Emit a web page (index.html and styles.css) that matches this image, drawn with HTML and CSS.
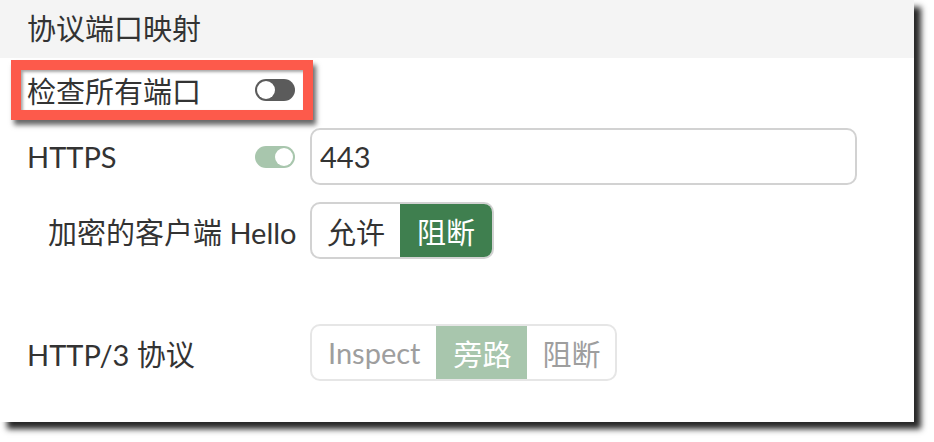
FILE: index.html
```html
<!DOCTYPE html>
<html lang="zh-CN">
<head>
    <meta charset="UTF-8">
    <meta name="viewport" content="width=device-width, initial-scale=1.0">
    <title>协议端口映射</title>
    <link rel="stylesheet" href="styles.css">
</head>
<body>
    <section class="panel">
        <header class="panel-header">协议端口映射</header>

        <div class="highlight">
            <div class="row row-check">
                <span class="label">检查所有端口</span>
                <span class="toggle"></span>
            </div>
        </div>

        <div class="row row-https">
            <span class="label">HTTPS</span>
            <span class="toggle toggle-on"></span>
            <input class="port-input" type="text" value="443">
        </div>

        <div class="row row-hello">
            <span class="label label-sub">加密的客户端 Hello</span>
            <div class="segment">
                <span class="seg-item">允许</span>
                <span class="seg-item seg-active">阻断</span>
            </div>
        </div>

        <div class="row row-http3">
            <span class="label label-wide">HTTP/3 协议</span>
            <div class="segment segment-disabled">
                <span class="seg-item">Inspect</span>
                <span class="seg-item seg-active">旁路</span>
                <span class="seg-item">阻断</span>
            </div>
        </div>
    </section>
</body>
</html>
```

FILE: styles.css
```css
:root {
    --text: #333333;
    --header-bg: #f4f4f4;
    --green: #3f7f4f;
    --green-light: #a8c6ad;
    --border: #d2d2d2;
    --red: #fd5a4b;
}

* {
    margin: 0;
    padding: 0;
    box-sizing: border-box;
}

body {
    background: #ffffff;
    color: var(--text);
    font-family: Lato, "Noto Sans CJK SC", sans-serif;
    font-size: 29px;
    min-height: 442px;
    padding-bottom: 20px;
}

.panel {
    width: 914px;
    height: 422px;
    background: #ffffff;
    box-shadow: 7px 7px 6px rgba(0,0,0,0.85);
}

.panel-header {
    height: 58px;
    line-height: 58px;
    padding-left: 27px;
    background: var(--header-bg);
}

.highlight {
    width: 302px;
    margin: 2px 0 0 11px;
    border: 10px solid var(--red);
    box-shadow: 3px 5px 5px rgba(0,0,0,0.6);
}

.row {
    display: flex;
    align-items: center;
}

.row-check {
    height: 40px;
    padding-left: 6px;
    box-shadow: inset 2px 2px 3px rgba(0,0,0,0.35);
}

.label {
    width: 228px;
    flex-shrink: 0;
    white-space: nowrap;
}

.toggle {
    width: 40px;
    height: 22px;
    border-radius: 11px;
    background: #5b5b5b;
    display: flex;
    align-items: center;
    padding: 0 2px;
    flex-shrink: 0;
}

.toggle::before {
    content: "";
    width: 18px;
    height: 18px;
    border-radius: 50%;
    background: #ffffff;
}

.toggle-on {
    background: var(--green-light);
    justify-content: flex-end;
}

.row-https {
    height: 57px;
    margin-top: 8px;
    padding-left: 27px;
}

.port-input {
    width: 547px;
    height: 57px;
    margin-left: 15px;
    border: 2px solid var(--border);
    border-radius: 10px;
    padding: 0 8px;
    font: inherit;
    color: var(--text);
    outline: none;
}

.row-hello {
    height: 57px;
    margin-top: 17px;
}

.label-sub {
    width: 310px;
    padding-left: 48px;
}

.row-http3 {
    height: 57px;
    margin-top: 65px;
    padding-left: 27px;
}

.label-wide {
    width: 283px;
}

.segment {
    display: flex;
    height: 57px;
    border: 2px solid var(--border);
    border-radius: 10px;
    overflow: hidden;
}

.seg-item {
    display: flex;
    align-items: center;
    padding: 0 15px;
    white-space: nowrap;
}

.seg-active {
    background: var(--green);
    color: #ffffff;
    margin: -2px -2px -2px 0;
    padding: 0 19px 0 17px;
}

.segment-disabled {
    border-color: #e6e6e6;
    color: #9e9e9e;
}

.segment-disabled .seg-item {
    padding: 0 15px;
}

.segment-disabled .seg-item:first-child {
    padding: 0 16px;
}

.segment-disabled .seg-active {
    background: var(--green-light);
    margin: -2px 0;
    padding: 0 16px 0 17px;
}
```
